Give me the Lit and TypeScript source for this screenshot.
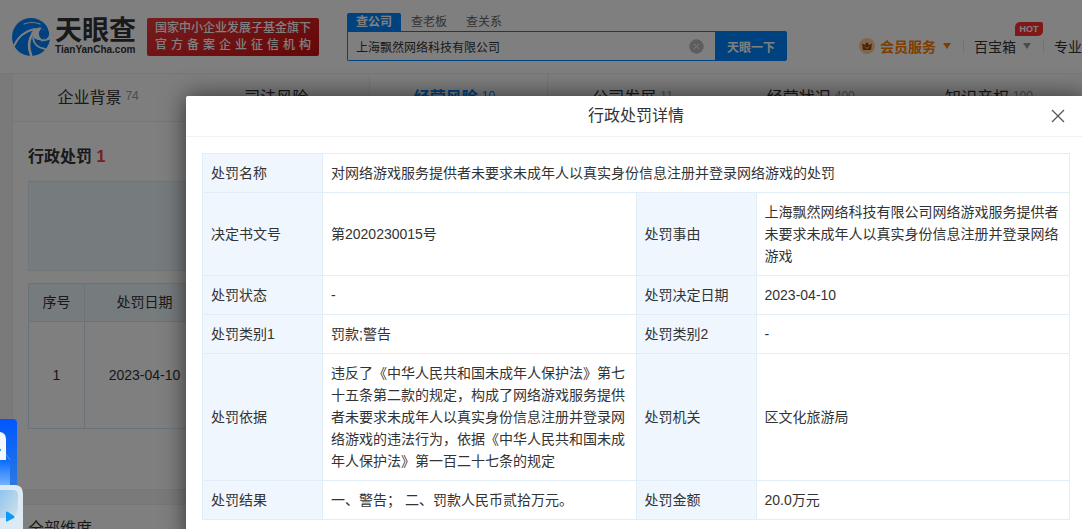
import { LitElement, html, css, svg } from "lit";
import { customElement, state } from "lit/decorators.js";

const tabs = [
  { name: "企业背景", count: "74" },
  { name: "司法风险", count: "" },
  { name: "经营风险", count: "10", active: true },
  { name: "公司发展", count: "11" },
  { name: "经营状况", count: "400" },
  { name: "知识产权", count: "100" },
];

const details: [string, string, string?, string?][] = [
  ["处罚名称", "对网络游戏服务提供者未要求未成年人以真实身份信息注册并登录网络游戏的处罚"],
  ["决定书文号", "第2020230015号", "处罚事由", "上海飘然网络科技有限公司网络游戏服务提供者未要求未成年人以真实身份信息注册并登录网络游戏"],
  ["处罚状态", "-", "处罚决定日期", "2023-04-10"],
  ["处罚类别1", "罚款;警告", "处罚类别2", "-"],
  ["处罚依据", "违反了《中华人民共和国未成年人保护法》第七十五条第二款的规定，构成了网络游戏服务提供者未要求未成年人以真实身份信息注册并登录网络游戏的违法行为，依据《中华人民共和国未成年人保护法》第一百二十七条的规定", "处罚机关", "区文化旅游局"],
  ["处罚结果", "一、警告； 二、罚款人民币贰拾万元。", "处罚金额", "20.0万元"],
];

const base = css`
  * { box-sizing: border-box; }
  button, input { font: inherit; color: inherit; border: 0; background: none; padding: 0; margin: 0; }
  button { cursor: pointer; }
  a { color: inherit; text-decoration: none; }
`;

@customElement("site-header")
class SiteHeader extends LitElement {
  static styles = [base, css`
    :host { display: block; }
    .bar { display: flex; align-items: flex-start; height: 74px; padding: 0 0 0 12px; background: #fff; border-bottom: 1px solid #eee; white-space: nowrap; overflow: hidden; }
    .logo { display: flex; gap: 5px; margin-top: 18px; width: 135px; flex: none; }
    .mark { width: 38px; height: 38px; flex: none; }
    .word { display: flex; flex-direction: column; color: #333; font-weight: 700; }
    .cn { font-size: 27px; line-height: 26px; }
    .en { font-size: 10px; line-height: 12px; }
    .slogan { flex: none; width: 172px; height: 38px; margin-top: 18px; padding: 2px 8px; border-radius: 2px; background: linear-gradient(160deg, #ee3a3a, #cc0e12); color: #fff; font-size: 12px; line-height: 17px; font-weight: 500; }
    .spread { display: block; text-align: justify; text-align-last: justify; }
    .search { flex: none; width: 440px; margin: 13px 0 0 28px; font-size: 12px; }
    .modes { display: flex; gap: 1px; height: 18px; }
    .mode { padding: 0 9px; line-height: 18px; color: #666; border-radius: 2px 2px 0 0; }
    .mode.on { background: #0084ff; color: #fff; font-weight: 700; }
    .box { display: flex; height: 30px; }
    .field { flex: 1; display: flex; align-items: center; border: 1px solid #0084ff; border-right: 0; border-radius: 0 0 0 2px; padding: 0 11px 0 8px; }
    .input { flex: 1; min-width: 0; height: 28px; outline: none; color: #333; }
    .clear { display: flex; }
    .go { width: 72px; background: #0084ff; color: #fff; font-weight: 700; border-radius: 0 2px 2px 0; }
    .nav { display: flex; align-items: center; margin: 36px 0 0 72px; height: 20px; font-size: 14px; color: #333; }
    .item { position: relative; display: flex; align-items: center; flex: none; height: 20px; }
    .item + .item { margin-left: 12px; padding-left: 11px; }
    .item + .item::before { content: ""; width: 1px; height: 14px; background: #e6e6e6; margin: 0 10px 0 -11px; }
    .vip { color: #ff7a00; font-weight: 700; }
    .crown { margin-right: 5px; }
    .caret { margin-left: 7px; border: 4px solid transparent; border-top: 6px solid #999; border-bottom: 0; }
    .vip .caret { border-top-color: #ff7a00; }
    .hot { position: absolute; right: -12px; top: -14px; width: 28px; height: 14px; border-radius: 5px 2px 5px 0; background: #ff3333; color: #fff; font-size: 9px; line-height: 14px; font-weight: 700; text-align: center; }
  `];

  render() {
    return html`
      <header class="bar">
        <a class="logo" href="#">
          <svg class="mark" viewBox="0 0 38 38" aria-hidden="true">
            <circle cx="19" cy="19" r="19" fill="#0084ff" />
            <g fill="none" stroke="#fff" stroke-linecap="round">
              <path d="M12 6Q20 3 28 6" stroke-width="1.200" />
              <path d="M2 28Q8 14 23 11" stroke-width="1.800" />
              <path d="M19 37Q14 24 22 14" stroke-width="2.600" />
              <path d="M33 31Q22 29 21 20" stroke-width="1.800" />
            </g>
            <path d="M19 15Q24 8 31 9Q28 11 27 14Q26 19 31 22Q26 23 22 20Z" fill="#fff" />
            <path d="M30 11Q36 12 39 9V21Q33 24 28 23Q35 20 34 15Q33 12 30 11Z" fill="#fff" />
            <path d="M27 7Q35 6 37 14Q38 20 32 22Q34 16 32 12Q30 9 25 9Z" fill="#0084ff" />
          </svg>
          <span class="word"><span class="cn">天眼查</span><span class="en">TianYanCha.com</span></span>
        </a>
        <div class="slogan">国家中小企业发展子基金旗下<span class="spread">官方备案企业征信机构</span></div>
        <div class="search">
          <div class="modes">
            <button class="mode on">查公司</button><button class="mode">查老板</button><button class="mode">查关系</button>
          </div>
          <div class="box">
            <div class="field">
              <input class="input" aria-label="公司名称" value="上海飘然网络科技有限公司" />
              <button class="clear" aria-label="清除">
                <svg width="15" height="15" viewBox="0 0 15 15"><circle cx="7.500" cy="7.500" r="7.200" fill="#bbb" /><path d="M4.800 4.800l5.400 5.400M10.200 4.800l-5.400 5.400" stroke="#fff" /></svg>
              </button>
            </div>
            <button class="go">天眼一下</button>
          </div>
        </div>
        <nav class="nav">
          <a class="item vip" href="#">
            <svg class="crown" width="16" height="16" viewBox="0 0 16 16" aria-hidden="true"><circle cx="8" cy="8" r="8" fill="#ffce9e" /><path d="M3 5.500L5.700 7L8 4L10.300 7L13 5.500L12 12H4Z" fill="#9c4600" /><path d="M6 8.500L8 10.500L10 8.500" fill="none" stroke="#ffce9e" /></svg>
            会员服务<span class="caret"></span>
          </a>
          <a class="item" href="#">百宝箱<span class="caret"></span><span class="hot">HOT</span></a>
          <a class="item" href="#">专业</a>
        </nav>
      </header>`;
  }
}

@customElement("company-page")
class CompanyPage extends LitElement {
  static styles = [base, css`
    :host { display: block; padding-left: 12px; }
    .card { background: #fff; border: 1px solid #eee; border-width: 0 0 1px 1px; }
    .tabs { display: grid; grid-template-columns: repeat(6, 1fr); height: 48px; border-bottom: 1px solid #eee; }
    .tab { display: flex; align-items: center; justify-content: center; gap: 4px; padding: 0 8px 4px 0; font-size: 16px; color: #333; background: #fcfcfc; }
    .tab.on { color: #0084ff; font-weight: 700; background: #fff; border: 1px solid #eee; border-width: 0 1px; }
    .num { font-size: 12px; font-weight: 400; color: #999; }
    .on .num { color: #0084ff; }
    .section { padding: 23px 0 60px 15px; }
    .title { margin: 0; font-size: 16px; line-height: 24px; font-weight: 700; color: #333; }
    .red { color: #f04040; }
    .filter { height: 90px; margin: 12px 0; border: 1px solid #deebf6; background: #edf6fd; }
    .list { width: 100%; border-collapse: collapse; table-layout: fixed; font-size: 14px; color: #333; text-align: center; }
    .list th, .list td { border: 1px solid #d6e6f5; padding: 0; font-weight: 400; }
    .list th { height: 38px; padding-bottom: 4px; background: #edf6fd; }
    .list td { height: 107px; }
    .c1 { width: 56px; }
    .c2 { width: 120px; }
    .more { margin-top: 14px; padding: 12px 0 12px 15px; border-top-width: 1px; }
    .more .title { font-weight: 400; }
  `];

  render() {
    return html`
      <main>
        <section class="card">
          <nav class="tabs">
            ${tabs.map((t) => html`<a class="tab ${t.active ? "on" : ""}" href="#">${t.name}${t.count ? html`<span class="num">${t.count}</span>` : ""}</a>`)}
          </nav>
          <div class="section">
            <h2 class="title">行政处罚 <span class="red">1</span></h2>
            <div class="filter"></div>
            <table class="list">
              <colgroup><col class="c1" /><col class="c2" /><col /></colgroup>
              <thead><tr><th>序号</th><th>处罚日期</th><th></th></tr></thead>
              <tbody><tr><td>1</td><td>2023-04-10</td><td></td></tr></tbody>
            </table>
          </div>
        </section>
        <section class="card more"><h2 class="title">全部维度</h2></section>
      </main>`;
  }
}

@customElement("detail-dialog")
class DetailDialog extends LitElement {
  static styles = [base, css`
    :host { display: block; flex: 0 0 900px; background: #fff; border-radius: 2px; box-shadow: 0 0 24px rgba(0, 0, 0, 0.6); color: #333; }
    .head { display: flex; align-items: center; height: 41px; padding: 0 20px 0 36px; border-bottom: 1px solid #f2f2f2; }
    .name { flex: 1; margin: 0; text-align: center; font-size: 16px; line-height: 22px; font-weight: 400; }
    .close { display: flex; }
    .body { padding: 16px 16px 24px; }
    .grid { width: 100%; border-collapse: collapse; table-layout: fixed; font-size: 14px; line-height: 22px; }
    .grid th, .grid td { border: 1px solid #e1edf7; padding: 8px; text-align: left; vertical-align: middle; font-weight: 400; }
    .grid th { background: #eff6fd; }
    .key { width: 120px; }
  `];

  render() {
    return html`
      <div role="dialog" aria-labelledby="name">
        <div class="head">
          <h1 class="name" id="name">行政处罚详情</h1>
          <button class="close" aria-label="关闭" @click=${() => this.dispatchEvent(new CustomEvent("dismiss"))}>
            <svg width="16" height="16" viewBox="0 0 16 16"><path d="M2 2L14 14M14 2L2 14" stroke="#555" stroke-width="1.300" /></svg>
          </button>
        </div>
        <div class="body">
          <table class="grid">
            <colgroup><col class="key" /><col /><col class="key" /><col /></colgroup>
            <tbody>
              ${details.map(([k, v, k2, v2]) => html`<tr>
                <th scope="row">${k}</th>
                ${k2 ? html`<td>${v}</td><th scope="row">${k2}</th><td>${v2}</td>` : html`<td colspan="3">${v}</td>`}
              </tr>`)}
            </tbody>
          </table>
        </div>
      </div>`;
  }
}

@customElement("app-root")
class AppRoot extends LitElement {
  static styles = css`
    :host { display: block; position: relative; height: 100vh; overflow: hidden; background: #f5f5f5; font-family: "Liberation Sans", "Noto Sans CJK SC", sans-serif; }
    .mask { position: absolute; inset: 0; display: flex; align-items: flex-start; padding: 96px 0 0 186px; background: rgba(0, 0, 0, 0.5); }
    .promo { position: absolute; left: 0; bottom: 0; display: block; }
  `;

  @state() open = true;

  promo() {
    return svg`
      <defs>
        <linearGradient id="blue" x2="0" y2="1"><stop offset="0" stop-color="#0057ff" /><stop offset="1" stop-color="#2d7ce0" /></linearGradient>
        <linearGradient id="fade" x2="0" y2="1"><stop offset="0" stop-color="#0a6cff" /><stop offset="1" stop-color="#8dc2fa" /></linearGradient>
        <linearGradient id="glass" x2="1" y2="1"><stop offset="0" stop-color="#8fc4ee" /><stop offset="1" stop-color="#d2e2ea" /></linearGradient>
      </defs>
      <path d="M0 0H13Q17 0 17 4V72H0Z" fill="url(#blue)" />
      <path d="M0 13Q6 14 6 20V41H0Z" fill="#f3f8ff" />
      <path d="M0 30Q1 29 1 32H0Z" fill="#2d9bf0" />
      <path d="M0 41H10V72H0Z" fill="url(#fade)" />
      <path d="M6 35L10 41" stroke="#4a98ff" />
      <path d="M0 66H16Q23 67 23 75V110H0Z" fill="#dcebf3" />
      <path d="M0 71H13Q18 71 18 76V90Q17 98 8 99H0Z" fill="url(#glass)" />
      <path d="M6 93Q6 92 8 93L14 97Q15 98 14 99L8 102Q6 103 6 102Z" fill="#0b98ff" />`;
  }

  render() {
    return html`
      <site-header></site-header>
      <company-page></company-page>
      ${this.open ? html`<div class="mask"><detail-dialog @dismiss=${() => (this.open = false)}></detail-dialog></div>` : ""}
      <svg class="promo" width="24" height="110" viewBox="0 0 24 110" aria-hidden="true">${this.promo()}</svg>`;
  }
}
